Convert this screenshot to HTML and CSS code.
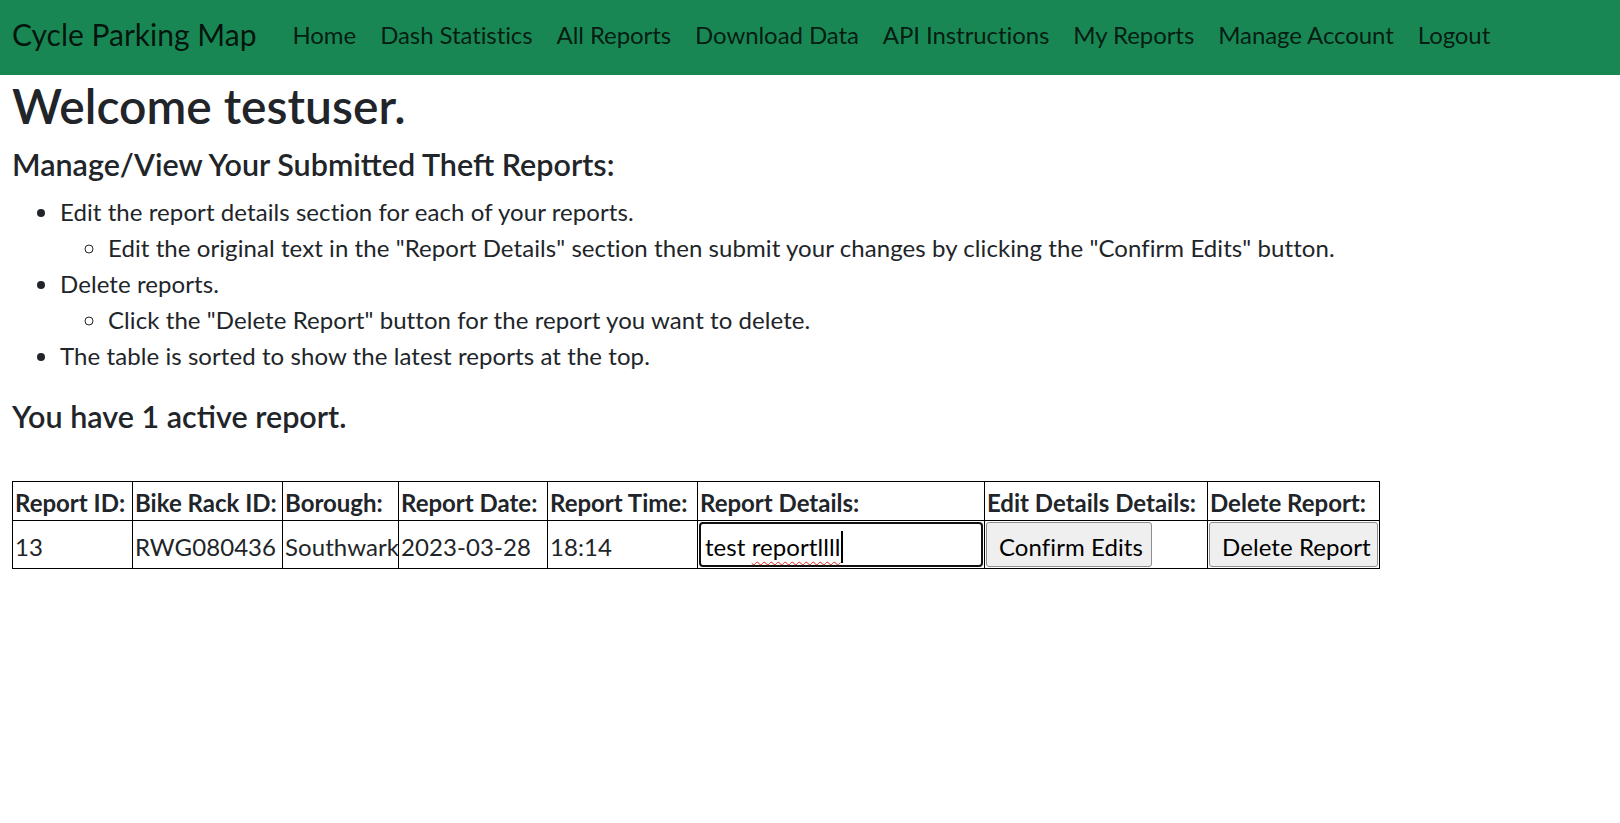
FILE: index.html
```html
<!DOCTYPE html>
<html lang="en">
<head>
<meta charset="utf-8">
<title>My Reports - Cycle Parking Map</title>
<link rel="stylesheet" href="styles.css">
</head>
<body>
<nav class="navbar">
  <a class="brand" href="#">Cycle Parking Map</a>
  <ul class="nav">
    <li><a class="nav-link" href="#">Home</a></li>
    <li><a class="nav-link" href="#">Dash Statistics</a></li>
    <li><a class="nav-link" href="#">All Reports</a></li>
    <li><a class="nav-link" href="#">Download Data</a></li>
    <li><a class="nav-link" href="#">API Instructions</a></li>
    <li><a class="nav-link" href="#">My Reports</a></li>
    <li><a class="nav-link" href="#">Manage Account</a></li>
    <li><a class="nav-link" href="#">Logout</a></li>
  </ul>
</nav>
<main class="content">
  <h1 class="title">Welcome testuser.</h1>
  <h5 class="subtitle">Manage/View Your Submitted Theft Reports:</h5>
  <ul class="instructions">
    <li>Edit the report details section for each of your reports.
      <ul><li>Edit the original text in the "Report Details" section then submit your changes by clicking the "Confirm Edits" button.</li></ul>
    </li>
    <li>Delete reports.
      <ul><li>Click the "Delete Report" button for the report you want to delete.</li></ul>
    </li>
    <li>The table is sorted to show the latest reports at the top.</li>
  </ul>
  <h5 class="count">You have 1 active report.</h5>
  <table class="reports">
    <colgroup>
      <col class="c-id"><col class="c-rack"><col class="c-borough"><col class="c-date"><col class="c-time"><col class="c-details"><col class="c-edit"><col class="c-delete">
    </colgroup>
    <thead>
      <tr><th>Report ID:</th><th>Bike Rack ID:</th><th>Borough:</th><th>Report Date:</th><th>Report Time:</th><th>Report Details:</th><th>Edit Details Details:</th><th>Delete Report:</th></tr>
    </thead>
    <tbody>
      <tr>
        <td class="cell-text">13</td>
        <td class="cell-text">RWG080436</td>
        <td class="cell-text">Southwark</td>
        <td class="cell-text">2023-03-28</td>
        <td class="cell-text">18:14</td>
        <td class="cell-control"><div class="field" role="textbox">test <span class="misspelt">reportllll</span><span class="caret"></span></div></td>
        <td class="cell-control"><button class="btn btn-confirm" type="button">Confirm Edits</button></td>
        <td class="cell-control"><button class="btn btn-delete" type="button">Delete Report</button></td>
      </tr>
    </tbody>
  </table>
</main>
</body>
</html>
```
FILE: styles.css
```css
* { box-sizing: border-box; }

body {
  margin: 0;
  font-family: Lato, "Noto Sans", sans-serif;
  font-size: 24px;
  line-height: 36px;
  letter-spacing: 0.075px;
  color: #212529;
  background: #fff;
}

.navbar {
  display: flex;
  align-items: center;
  height: 75px;
  padding: 0 12px 6px;
  background: #198754;
}

.brand {
  font-size: 30px;
  line-height: 45px;
  margin-right: 24px;
  letter-spacing: 0;
  color: rgba(0, 0, 0, 0.85);
  text-decoration: none;
  white-space: nowrap;
}

.nav {
  display: flex;
  list-style: none;
  margin: 0;
  padding: 0;
}

.nav-link {
  display: block;
  padding: 0 12px;
  letter-spacing: -0.08px;
  color: rgba(0, 0, 0, 0.8);
  text-decoration: none;
  white-space: nowrap;
}

.content {
  padding: 0 12px;
}

.title {
  margin: 2px 0 11px;
  font-size: 48px;
  line-height: 58px;
  font-weight: 600;
  letter-spacing: 0;
}

.subtitle,
.count {
  font-size: 30.5px;
  line-height: 36px;
  font-weight: 600;
  letter-spacing: 0;
}

.subtitle { margin: 0 0 12px; }
.count { margin: 0 0 47px; }

.instructions {
  margin: 0 0 24px;
  padding-left: 48px;
}

.instructions ul {
  margin: 0;
  padding-left: 48px;
}

.reports {
  border-collapse: collapse;
  table-layout: fixed;
  width: 1368px;
}

.reports th,
.reports td {
  border: 1px solid #000;
  text-align: left;
  vertical-align: middle;
  white-space: nowrap;
  overflow: hidden;
}

.reports th {
  padding: 3px 2px 0;
  line-height: 35px;
  font-weight: 700;
  letter-spacing: 0;
}

.reports .cell-text { padding: 4px 2px 0; }
.reports .cell-control { padding: 1px; }

.c-id { width: 120px; }
.c-rack { width: 150px; }
.c-borough { width: 116px; }
.c-date { width: 149px; }
.c-time { width: 150px; }
.c-details { width: 287px; }
.c-edit { width: 223px; }
.c-delete { width: 172px; }

.field {
  height: 45px;
  border: 2px solid #111;
  border-radius: 4px;
  padding: 4px 4px 0;
  line-height: 37px;
  background: #fff;
  color: #000;
}

.misspelt {
  text-decoration: underline wavy #e0201b;
  text-decoration-thickness: 1px;
  text-underline-offset: 5px;
}

.caret {
  display: inline-block;
  width: 2px;
  height: 32px;
  margin-left: 1px;
  vertical-align: -7px;
  background: #000;
}

.btn {
  height: 45px;
  padding: 3px 12px 0;
  font-family: inherit;
  font-size: 24px;
  letter-spacing: 0.075px;
  color: #000;
  background: #efefef;
  border: 1px solid #8f8f8f;
  border-radius: 3px;
}

.btn-confirm { width: 166px; }
.btn-delete { width: 100%; }
```
